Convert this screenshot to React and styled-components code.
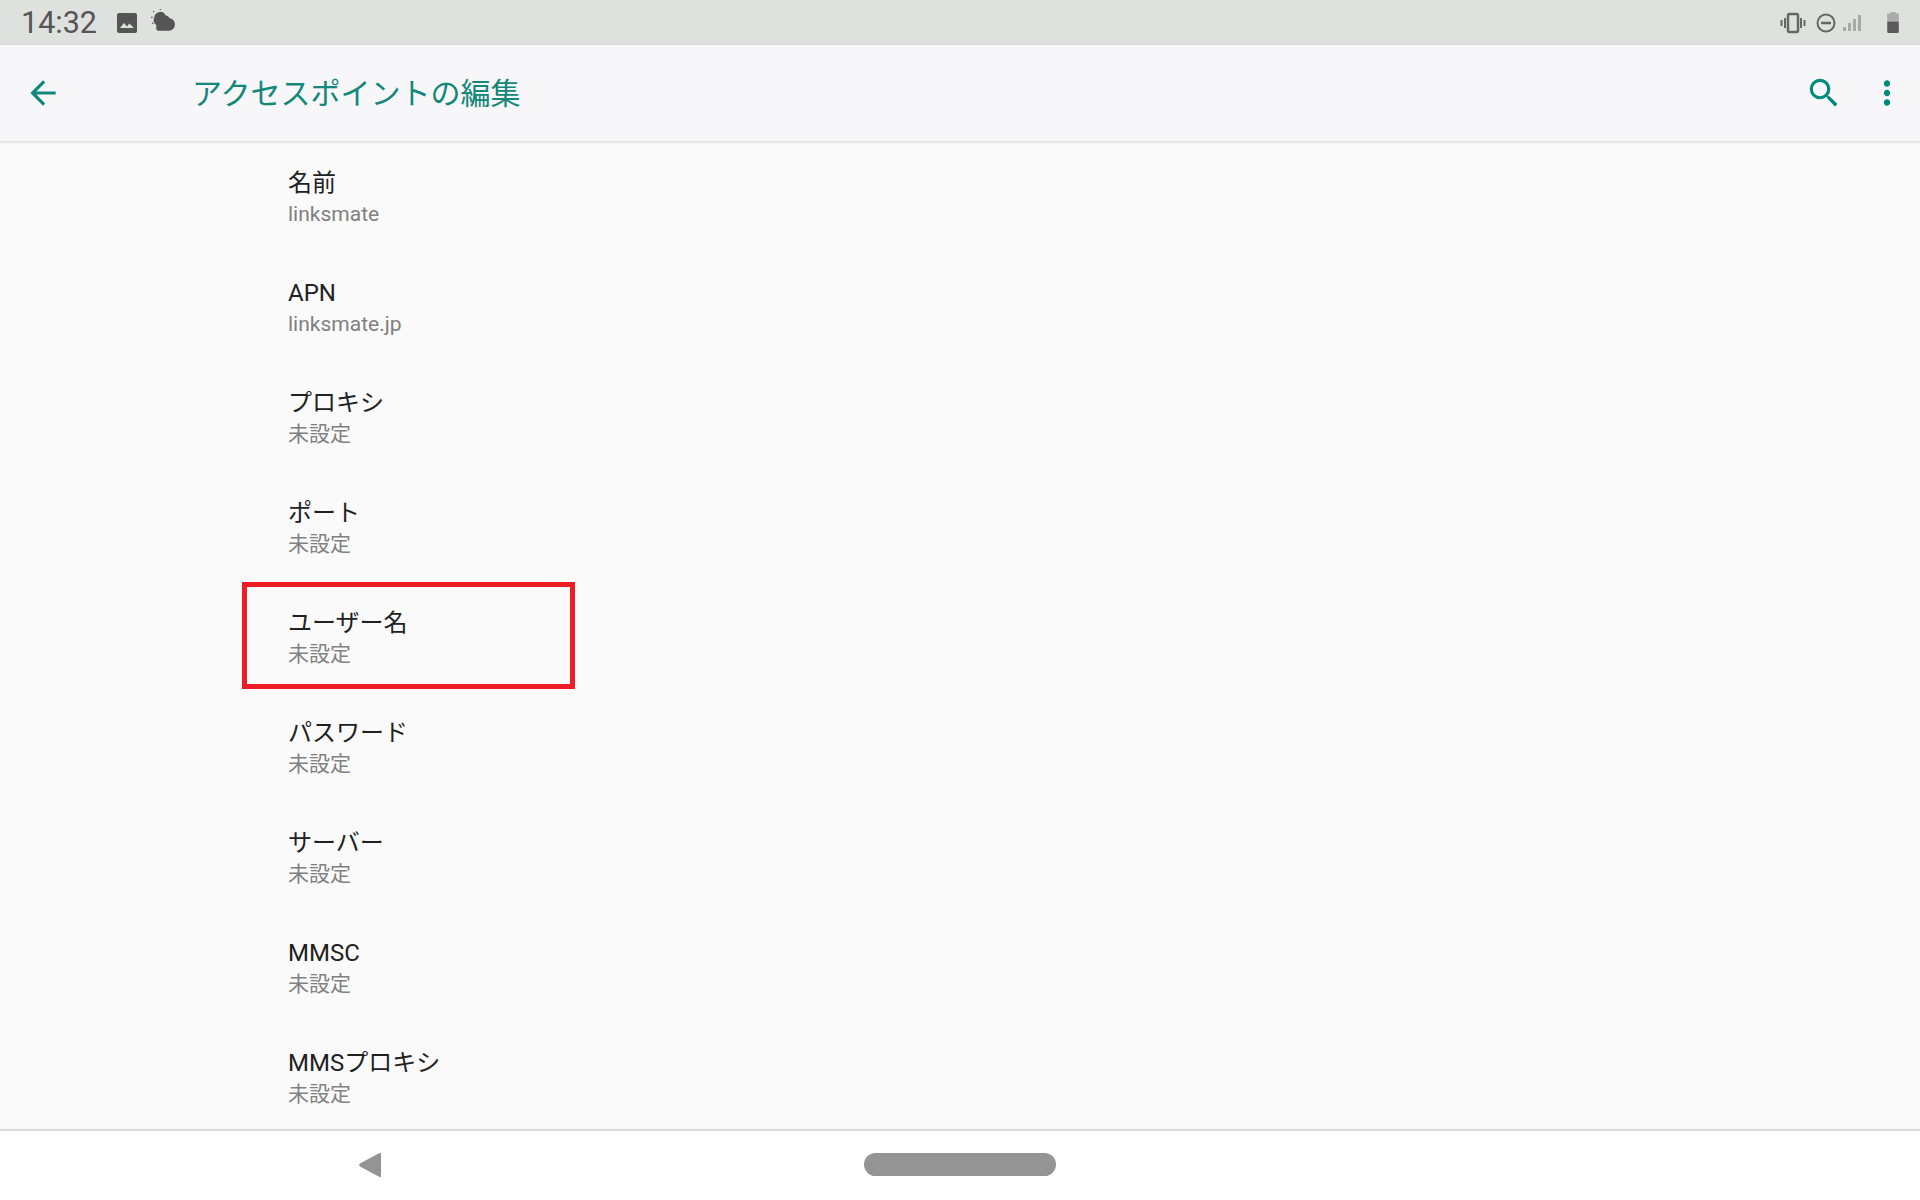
import React from 'react'
import styled, { createGlobalStyle } from 'styled-components'

const GlobalStyle = createGlobalStyle`
  html, body { margin: 0; padding: 0; }
  body { font-family: Roboto, "Noto Sans CJK JP", sans-serif; background: #fafafa; }
`

const Screen = styled.div`
  width: 1920px;
  height: 1200px;
  display: flex;
  flex-direction: column;
  overflow: hidden;
  background: #fafafa;
`

const StatusBar = styled.div`
  height: 45px;
  flex: none;
  display: flex;
  align-items: center;
  background: #dfe1df;
  padding: 0 21px 0 21px;
  color: #555;
`

const Clock = styled.span`
  font-size: 30.5px;
  line-height: 45px;
  width: 96px;
`

const StatusGroup = styled.div`
  display: flex;
  align-items: center;
  gap: ${p => p.$gap}px;
  margin-left: ${p => p.$left || 0}px;
`

const Spacer = styled.div`
  flex: 1;
`

const Toolbar = styled.header`
  height: 96px;
  flex: none;
  display: flex;
  align-items: center;
  padding: 0 14px 0 24px;
  background: #f7f6f8;
  box-shadow: 0 1px 3px rgba(0, 0, 0, 0.16);
  color: #00897b;
  position: relative;
  z-index: 1;
`

const Title = styled.h1`
  margin: 0 0 4px 130px;
  font-size: 30px;
  font-weight: 400;
  flex: 1;
  color: #12877a;
`

const ToolIcons = styled.div`
  display: flex;
  align-items: center;
  gap: 25px;
`

const List = styled.main`
  flex: 1;
  min-height: 0;
  overflow: hidden;
  padding-top: 1px;
`

const Row = styled.div`
  height: 110px;
  box-sizing: border-box;
  padding: 1px 0 0 288px;
  display: flex;
  flex-direction: column;
  justify-content: center;
  position: relative;
`

const RowTitle = styled.div`
  font-size: 24px;
  line-height: 32px;
  color: #212121;
`

const RowValue = styled.div`
  font-size: 21px;
  line-height: 30px;
  color: #808080;
`

const Highlight = styled.div`
  position: absolute;
  left: 242px;
  top: 0;
  width: 333px;
  height: 107px;
  box-sizing: border-box;
  border: 5px solid #ee1c25;
`

const NavBar = styled.nav`
  height: 71px;
  flex: none;
  box-sizing: border-box;
  background: #fff;
  border-top: 2px solid #dcdcdc;
  display: flex;
  align-items: center;
  position: relative;
  justify-content: center;
`

const BackButton = styled.svg`
  position: absolute;
  left: 359px;
  top: 21px;
`

const HomePill = styled.div`
  width: 192px;
  height: 23px;
  border-radius: 12px;
  background: #949494;
  margin-bottom: 3px;
`

const rows = [
  ['名前', 'linksmate'],
  ['APN', 'linksmate.jp'],
  ['プロキシ', '未設定'],
  ['ポート', '未設定'],
  ['ユーザー名', '未設定', true],
  ['パスワード', '未設定'],
  ['サーバー', '未設定'],
  ['MMSC', '未設定'],
  ['MMSプロキシ', '未設定'],
]

function App() {
  return (
    <Screen>
      <GlobalStyle />
      <StatusBar>
        <Clock>14:32</Clock>
        <StatusGroup $gap={12}>
          <svg width="20" height="20" viewBox="0 0 20 20">
            <path fill="#555" d="M2 0h16a2 2 0 0 1 2 2v16a2 2 0 0 1-2 2H2a2 2 0 0 1-2-2V2a2 2 0 0 1 2-2z" />
            <path fill="#dfe1df" d="M3 15l4-5 3 3.4 2.4-3L17 15z" />
          </svg>
          <svg width="29" height="29" viewBox="0 0 28 28">
            <path fill="#555" d="M9 4a6 6 0 0 1 7 3a6 6 0 0 1 4 3a5.500 5.500 0 0 1 5 5.500a6 6 0 0 1-6 6.500H9a3 3 0 0 1-2-1.500v-4a6 6 0 0 1-2-7a6 6 0 0 1 4-5.500z" />
            <path stroke="#555" strokeWidth="1.200" strokeDasharray="1.500 2" d="M11 1l0 1M4 3l1 1M2 9h2M3 15l2-1" />
          </svg>
        </StatusGroup>
        <Spacer />
        <StatusGroup $gap={10}>
          <svg width="26" height="24" viewBox="0 0 26 24" fill="none" stroke="#666">
            <rect x="8" y="3" width="10" height="18" rx="1.500" strokeWidth="2.500" />
            <path strokeWidth="2" d="M5 7v10M21 7v10" />
            <path strokeWidth="2" d="M1.500 9v6M24.500 9v6" />
          </svg>
          <svg width="20" height="20" viewBox="0 0 20 20" fill="none" stroke="#666" strokeWidth="2">
            <circle cx="10" cy="10" r="8.500" />
            <path strokeWidth="2.500" d="M5 10h10" />
          </svg>
        </StatusGroup>
        <StatusGroup $gap={0} $left={7}>
          <svg width="19" height="18" viewBox="0 0 19 18" fill="#a8a8a8">
            <rect x="0" y="13" width="3" height="4" />
            <rect x="5" y="9" width="3" height="8" />
            <rect x="10" y="5" width="3" height="12" />
            <rect x="15" y="1" width="3" height="16" />
          </svg>
        </StatusGroup>
        <StatusGroup $gap={0} $left={25}>
          <svg width="12" height="21" viewBox="0 0 11 20">
            <path fill="#ababab" d="M3 0h5v1.500h3V9H0V1.500h3z" />
            <path fill="#5a5a5a" d="M0 9h11v10a1 1 0 0 1-1 1H1a1 1 0 0 1-1-1z" />
          </svg>
        </StatusGroup>
      </StatusBar>

      <Toolbar>
        <svg width="38" height="38" viewBox="0 0 24 24" fill="#12877a">
          <path d="M20 11H7.830l5.590-5.590L12 4l-8 8 8 8 1.410-1.410L7.830 13H20v-2z" />
        </svg>
        <Title>アクセスポイントの編集</Title>
        <ToolIcons>
          <svg width="38" height="38" viewBox="0 0 24 24" fill="#00897b">
            <path d="M15.500 14h-.790l-.280-.270A6.470 6.470 0 0 0 16 9.500 6.500 6.500 0 1 0 9.500 16c1.610 0 3.090-.590 4.230-1.570l.270.280v.790l5 4.990L20.490 19l-4.990-5zm-6 0C7.010 14 5 11.990 5 9.500S7.010 5 9.500 5 14 7.010 14 9.500 11.990 14 9.500 14z" />
          </svg>
          <svg width="38" height="38" viewBox="0 0 24 24" fill="#00897b">
            <path d="M12 8c1.100 0 2-.900 2-2s-.900-2-2-2-2 .900-2 2 .900 2 2 2zm0 2c-1.100 0-2 .900-2 2s.900 2 2 2 2-.900 2-2-.900-2-2-2zm0 6c-1.100 0-2 .900-2 2s.900 2 2 2 2-.900 2-2-.900-2-2-2z" />
          </svg>
        </ToolIcons>
      </Toolbar>

      <List>
        {rows.map(([name, value, marked]) => (
          <Row key={name}>
            <RowTitle>{name}</RowTitle>
            <RowValue>{value}</RowValue>
            {marked && <Highlight />}
          </Row>
        ))}
      </List>

      <NavBar>
        <BackButton width="22" height="26" viewBox="0 0 23 26">
          <path fill="#949494" d="M21.500 0.500a1 1 0 0 1 1.500 1v23a1 1 0 0 1-1.500 1L1 14.500a2 2 0 0 1 0-3z" />
        </BackButton>
        <HomePill />
      </NavBar>
    </Screen>
  )
}

export default App
